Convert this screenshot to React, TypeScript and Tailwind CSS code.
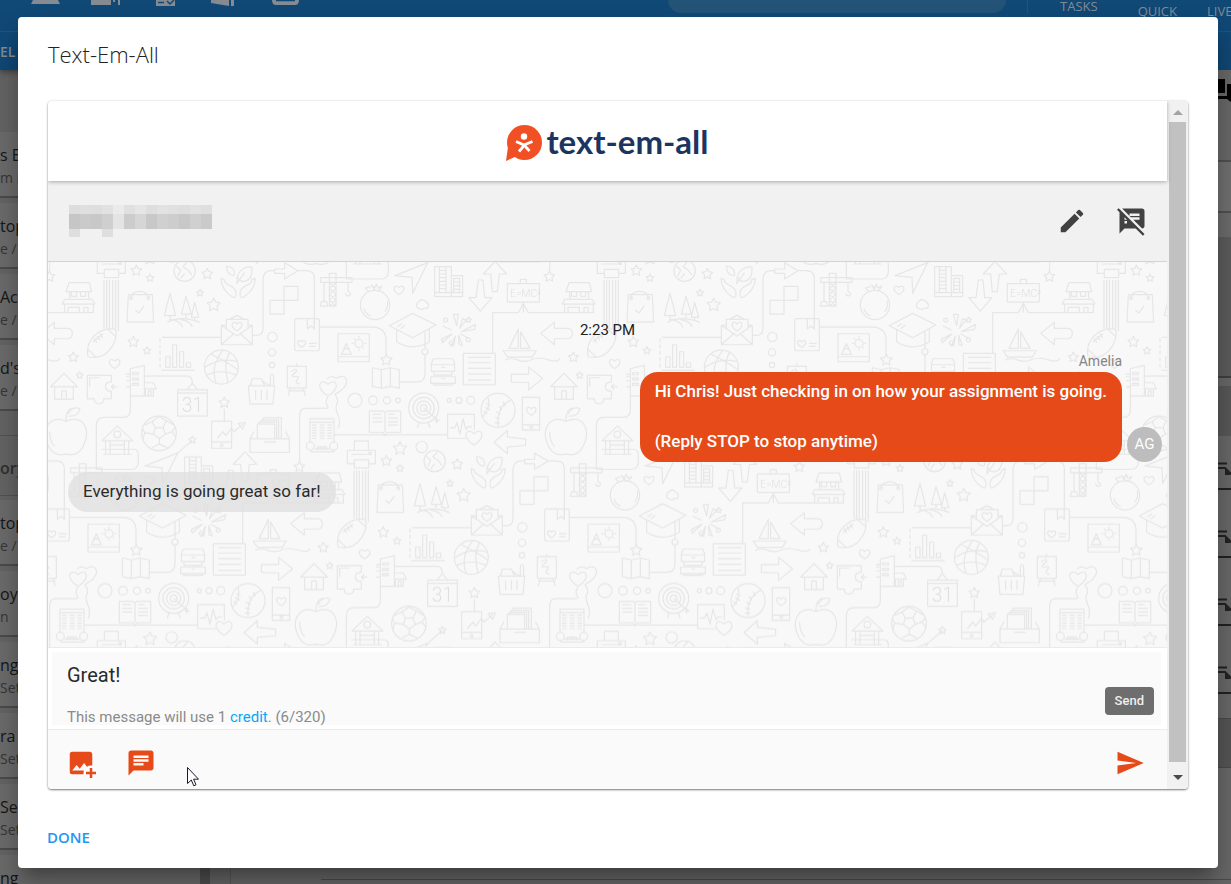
import { MdChat, MdEdit, MdSend, MdSpeakerNotesOff } from "react-icons/md";

const OPEN = "font-['Open_Sans',sans-serif]";
const ROBOTO = "font-[Roboto,sans-serif]";

const firstRows = [
	["s Br", "m In"],
	["top", "e / I"],
	["Acro", "e / C"],
	["d's F", "e / C"],
];

const secondRows = [
	["top", "e / I"],
	["oy", "n"],
	["ng", "Sett"],
	["ra", "Sett"],
	["Se", "Sett"],
	["ng", ""],
];

const stars = [
	[265, 32, 17], [306, 54, 12], [478, 42, 17], [456, 99, 11], [497, 135, 21],
	[256, 246, 17], [297, 272, 12], [76, 292, 16], [95, 346, 11], [433, 540, 12],
	[529, 428, 17], [1015, 300, 18], [1056, 566, 21], [754, 621, 17], [1262, 180, 9],
];

const hearts = [
	[200, 311, 17], [567, 199, 16], [761, 251, 13], [1053, 90, 16],
	[1450, 453, 15], [1278, 533, 26], [840, 385, 27],
];

const circles = [
	[410, 32, 32], [371, -10, 17], [520, 321, 51], [673, 231, 14], [672, 277, 11], [672, 315, 8],
	[333, 520, 52], [981, 135, 44], [933, 250, 12], [1131, 275, 9], [921, 421, 21], [975, 421, 13],
	[1017, 421, 11], [1050, 421, 7], [1127, 444, 45], [1127, 444, 32], [1127, 444, 21], [1127, 444, 10],
	[1204, 421, 6], [1233, 421, 9], [1268, 421, 12], [1350, 451, 51], [208, 523, 10], [521, 556, 4],
	[1450, 501, 4], [787, 558, 12], [857, 558, 12], [1193, 180, 6], [1261, 239, 6],
	[249, 114, 4], [301, 114, 4], [966, 580, 4],
];

const lines = [
	// store
	"M63 68H124L131 95H54ZM65 95V118M122 95V118M70 95V109H86V95M98 95V109H113V95M50 118H132L141 132H43ZM50 132V158H136V132M60 158V142H94V158M108 158V142H120V158M0 158H50",
	// printer and column
	"M169 0V-28H211V0M148 0H232V40H212V28H169V40H148ZM169 40V53H212V40M160 12H222M168 60V205M176 60V205M184 60V205M194 60V205M203 60V205M211 60V214",
	// shopping bag
	"M241 104H313L317 186H237ZM249 112Q252 94 275 94Q298 94 301 112M262 150L273 159L289 137",
	// trees
	"M366 100L349 167H383ZM366 167V180M414 109L400 162H430ZM414 162V174M440 127L430 172H452ZM440 172V182M358 187Q400 165 455 187M365 178Q395 180 405 202M395 178Q425 182 433 200",
	// globe
	"M385 18L398 30L390 48M420 2L405 20L420 30L432 45M398 55L410 40",
	// hands with a plant
	"M519 55Q520 90 552 110Q565 118 564 100Q564 85 545 76Q530 70 528 58ZM622 55Q621 90 588 110Q575 118 576 100Q576 85 596 76Q611 70 612 58ZM567 70Q564 35 590 24Q605 18 612 22Q614 60 590 64Q575 66 569 52M590 38L565 72M557 47Q535 45 536 18Q562 22 560 44Z",
	// arrow along the wire
	"M680 27H710V8L750 32L710 57V40H680ZM613 226H625Q645 226 645 206V60Q645 32 670 32H680M750 32H775Q799 32 799 55V205",
	"M708 79H750V121H708ZM666 121H708V162H666Z",
	// envelope
	"M520 196H535M600 196H613V254H520V196L567 228L613 196M520 254L556 222M613 254L578 222M535 205V178H600V205M545 178L567 166L589 178M342 232H520",
	// bar chart
	"M340 331H440M353 290H366V322H353ZM374 254H386V322H374ZM395 275H407V322H395ZM415 308H428V322H415Z",
	// basketball
	"M488 282Q545 310 570 330M470 322Q520 290 568 305M525 270Q485 320 505 370M545 277Q525 310 540 368M475 345Q520 325 565 345",
	// notebook
	"M746 176H808Q814 176 814 182V266Q814 272 808 272H746Q740 272 740 266V182Q740 176 746 176ZM778 176V207L789 198L799 207V176M783 250H806M783 259H803",
	"M814 201H975Q1014 203 1014 240V285",
	// crane
	"M844 40H864V138H844ZM818 53H912V67H818ZM844 67L864 85L844 103L864 120L844 138M864 67L844 85L864 103L844 120L864 138M828 67V125M820 125H836L839 138H817ZM900 67V95M900 95Q912 100 905 107Q895 110 892 100",
	// house
	"M8 380L48 340L88 380ZM20 380V418H76V380M41 418V392H55V418",
	// puzzle piece
	"M118 346H190V366Q172 366 172 380Q172 394 190 394V416H167Q168 431 153 431Q138 431 139 416H118ZM125 380V353H155M208 380H190L198 371M190 380L198 389",
	// office
	"M247 326L289 316V408H247ZM254 338H271V344H254ZM254 354H271V360H254ZM254 370H271V376H254ZM234 343H247M234 350H244M234 362H247M234 380H247M289 368H316L325 386H289M292 386V408H316V386M301 408V392H309V408M289 348H420Q433 350 433 370L418 388M433 370L448 388",
	"M247 408V450Q247 472 225 472H170Q145 472 145 497V628H250Q271 628 271 605V585Q271 568 258 568H160",
	// calendar
	"M389 389H478V468H389ZM389 399H478",
	// football
	"M120 290Q112 245 150 218Q175 202 203 208Q210 245 180 275Q155 298 120 290ZM120 268L145 292M178 206L205 232M135 245L165 222M138 234L146 248M147 227L155 241M156 221L164 234",
	// soccer ball
	"M322 503H345L352 522L334 536L316 522ZM322 503L312 485L333 470L355 482L345 503M352 522L372 515M316 522L290 518M334 536V552L312 563M334 552L358 563M290 495L312 485M355 482L378 495M290 518L284 540M290 518L283 505M372 515L383 530M372 515L380 503",
	// bank
	"M162 542L208 498L255 542ZM173 542V583M186 542V583M229 542V583M242 542V583M166 583H251M186 555H229",
	// phone with a graph
	"M529 446V484M491 484H551V565H491ZM491 546H551M508 535L525 515L533 527L550 505L558 515L585 492M570 490L592 487L584 507Z",
	// file box
	"M606 536H724V577H606ZM606 536L618 514M724 536L712 514M628 536V492H680V536M634 492V486H686V536M640 486V480H692V536M646 480V473H700V536M648 546H684",
	// basket
	"M601 377H680L675 432H606ZM607 377L613 356H640L650 377M642 362L665 377M667 377V348Q672 338 677 348V377M623 390V420M640 390V420M657 390V420",
	// easel
	"M718 319H775V384H718ZM746 310V319M720 392H773M728 384L720 408M765 384L772 408M730 335Q748 320 745 335Q725 350 738 350Q758 345 748 358Q738 368 755 372",
	// balloons
	"M836 357Q850 343 865 355Q890 340 896 362Q896 385 862 402M840 410Q828 425 840 440Q840 445 835 445H775Q755 445 755 465V605M860 402Q875 420 865 435Q862 450 872 470Q878 490 870 505",
	// bus
	"M786 476H858V546M786 476V546M786 487H858M799 566H845M786 575H860M808 570V560H835V570M817 570V560M826 570V560M792 495H806M792 503H806M792 511H806M792 519H806M792 527H806M792 535H806M815 495H830M815 503H830M815 511H830M815 519H830M815 527H830M815 535H830M838 495H852M838 503H852M838 511H852M838 519H852M838 527H852M838 535H852M858 524H1199",
	// tomato
	"M981 91L970 75L980 84L985 72L990 84L1002 78L992 92ZM968 80L952 84L962 94M1010 155Q1022 142 1018 122M948 145Q952 162 968 168",
	"M1123 149Q1100 145 1107 130Q1113 122 1122 118Q1135 122 1141 133Q1143 149 1128 144Z",
	// graduation cap
	"M1024 197L1094 160L1164 195L1094 233ZM1046 208V246Q1094 275 1144 246V208M1131 213V266M1131 284V340Q1131 366 1106 366H1054M1048 200L1062 190M1058 206L1072 195",
	// map
	"M973 323L1000 329L1027 323L1054 329V385L1027 379L1000 385L973 379ZM1000 329V385M1027 323V379",
	// framed picture
	"M870 221H964V305H870ZM870 290H964M880 283L895 250L910 283ZM887 270L895 264L903 270M933 228V234M933 266V272M911 250H917M949 250H955M918 235L922 239M948 265L944 261",
	// fireworks
	"M1216 163H1231L1226 197ZM1234 205L1245 175L1254 182ZM1240 215L1283 193L1280 208ZM1238 222L1262 235ZM1232 226L1243 257L1233 254ZM1222 228L1217 258L1211 254ZM1212 222L1183 248L1180 238ZM1210 210L1185 198ZM1210 240L1203 250L1210 258L1218 250",
	// towers
	"M1160 20H1210V110H1160ZM1174 20V98M1194 20V98M1174 31H1194M1174 42H1194M1174 53H1194M1174 64H1194M1174 75H1194M1174 86H1194M1160 98H1244M1210 47H1244V110H1210M1217 55H1235V98H1217ZM1217 66H1235M1217 77H1235M1217 88H1235",
	// arrows
	"M1262 113H1284L1291 60H1305L1310 113H1332L1297 153ZM1306 42L1341 4L1376 42H1354L1348 95H1333L1328 42Z",
	"M1478 220L1519 187V205H1556Q1573 205 1573 220Q1573 236 1556 236H1519V254Z",
	"M1390 343H1442V321L1484 355L1442 390V368L1390 366Z",
	"M1338 547L1378 511V531L1433 537V556L1378 561V581Z",
	"M1041 47L1139 8L1094 100L1092 52ZM1139 8L1183 -30",
	// blackboard
	"M1378 71H1474V126H1378ZM1417 71V58H1435V71M1426 130V158M1334 280V158H1411L1426 130L1441 158H1500",
	// sailboat
	"M1411 207V265H1383ZM1418 215L1446 265H1418ZM1365 272H1465L1453 291H1379ZM1372 300Q1390 292 1410 300T1450 299T1500 299T1536 295",
	// document
	"M1246 280H1342V374H1246ZM1260 292H1330M1260 308H1330M1260 325H1330M1260 342H1330M1260 360H1330",
	// stacked boxes
	"M1156 296H1214L1220 310V334H1150V310ZM1150 314H1220M1158 334V345H1212V334M1148 350H1222V370H1148ZM1156 370V375H1214V370M1180 322H1192M1180 356H1192",
	// target stand
	"M1113 487L1108 504M1140 487L1147 504M1127 444L1170 482M1160 482H1175M1166 472V490",
	// open book
	"M964 453H1005L1011 458L1017 453H1058V517H1017L1011 527L1005 517H964ZM1011 458V517M973 463H1000M973 474H1003M973 485H1003M1020 463H1040M1020 474H1050M1020 485H1050M1020 495H1050",
	// heart monitor
	"M1254 535H1199V463H1279V510M1206 503H1220L1227 488L1236 522L1245 476L1254 508L1260 500H1272",
	// baseball
	"M1320 412Q1330 440 1303 472M1388 420Q1345 440 1350 500M1314 430L1328 436M1312 442L1326 450M1306 453L1318 462M1365 425L1372 438M1352 438L1362 450M1344 455L1358 462M1340 472L1356 476M1340 488L1356 488",
	"M1423 412H1475V510H1423ZM1423 494H1475",
	// apple
	"M1554 484Q1525 470 1505 488Q1480 515 1502 560Q1520 592 1554 582Q1588 592 1605 560Q1627 515 1604 488Q1585 470 1554 484ZM1554 482Q1552 450 1575 443M1560 462Q1575 436 1596 446Q1590 470 1562 468M1505 515Q1505 545 1520 560",
];

function starPath(x: number, y: number, r: number) {
	let d = "";
	for (let i = 0; i < 10; i++) {
		const a = -Math.PI / 2 + (i * Math.PI) / 5;
		const rr = i % 2 ? r * 0.5 : r;
		d += `${i ? "L" : "M"}${(x + rr * Math.cos(a)).toFixed(1)} ${(y + rr * Math.sin(a)).toFixed(1)}`;
	}
	return d + "Z";
}

function heartPath(x: number, y: number, r: number) {
	return `M${x} ${y + r * 0.85}C${x - r * 1.6} ${y - r * 0.1} ${x - r * 0.8} ${y - r * 1.3} ${x} ${y - r * 0.45}C${x + r * 0.8} ${y - r * 1.3} ${x + r * 1.6} ${y - r * 0.1} ${x} ${y + r * 0.85}Z`;
}

const copies = [
	[0, 0], [-1500, 0], [750, 571], [-750, 571], [750, -571], [-750, -571], [0, 1142], [-1500, 1142],
];

function Doodles() {
	return (
		<svg className="absolute inset-0 w-full h-full" aria-hidden="true">
			<defs>
				<g id="doodle" fill="none" stroke="#e6e6e6" strokeWidth="3.6" strokeLinejoin="round">
					{lines.map((d) => <path key={d} d={d} />)}
					<path d="M336 235V330" strokeDasharray="12 7" />
					{stars.map(([x, y, r]) => <path key={`${x}-${y}`} d={starPath(x, y, r)} />)}
					{hearts.map(([x, y, r]) => <path key={`${x}-${y}`} d={heartPath(x, y, r)} />)}
					{circles.map(([x, y, r]) => <circle key={`${x}-${y}-${r}`} cx={x} cy={y} r={r} />)}
					<g fill="#dfdfdf" stroke="none" fontFamily="Roboto" fontWeight="300">
						<text x="401" y="455" fontSize="58">31</text>
						<text x="1386" y="112" fontSize="31">E=MC²</text>
					</g>
				</g>
				<pattern
					id="doodles"
					width="1500"
					height="1142"
					patternUnits="userSpaceOnUse"
					patternTransform="translate(0 -2) scale(0.33333)"
				>
					{copies.map(([x, y]) => <use key={`${x} ${y}`} href="#doodle" x={x} y={y} />)}
				</pattern>
			</defs>
			<rect width="100%" height="100%" fill="url(#doodles)" />
		</svg>
	);
}

function Row({ title, sub }: { title: string; sub: string }) {
	return (
		<div className="h-[66px] mb-[5px] pt-[11px] bg-[#6b6b6b] border-b-2 border-[#4b4b4b] whitespace-nowrap">
			<div className="text-base leading-6 text-[#161616]">{title}</div>
			<div className="text-sm leading-[22px] text-[#363636]">{sub}</div>
		</div>
	);
}

function CardIcon() {
	return (
		<svg className="w-[13px] h-[28px]" viewBox="0 0 13 28" fill="none" stroke="#222" strokeWidth="2">
			<path d="M0 1.500H9M0 6H7L13 12M0 27H13" />
			<path d="M7 7V13H13Z" fill="#222" stroke="none" />
		</svg>
	);
}

function Backdrop() {
	return (
		<div className={`fixed inset-0 overflow-hidden flex flex-col bg-[#646464] ${OPEN}`}>
			<header className="shrink-0 bg-[#104876] shadow-[0_2px_6px_rgba(0,0,0,0.4)]">
				<div className="h-[31px] flex items-start text-[#858b90]">
					<svg className="w-[270px] h-[7px] ml-[31px]" viewBox="0 0 270 7" fill="#858b90">
						<path d="M2 0H27L29 4H0ZM60 0H80V5H60ZM82 0H84V2H82ZM87 0H89V5H87ZM125 0H144V6H125ZM180 0H198V6L180 3ZM200 0H203V6H200ZM241 0H268Q268 5 264 5H245Q241 5 241 0Z" />
						<path d="M127 2.500H133M136 1L139 4L143 0M245 0.500H264" stroke="#104876" strokeWidth="1.500" fill="none" />
					</svg>
					<div className="h-[13px] w-[338px] ml-auto rounded-b-2xl bg-[#235477]" />
					<div className="h-[13px] ml-[21px] w-px bg-[#225379]" />
					<div className="ml-8 text-[13px] leading-3">TASKS</div>
					<div className="ml-10 pt-[5px] text-[13px] leading-3">QUICK</div>
					<div className="ml-[30px] pt-[5px] w-6 text-[13px] leading-3">LIVE</div>
				</div>
				<div className="h-[39px] border-t border-[#225379] pt-2 text-sm leading-6 font-semibold text-[#858b90]">EL</div>
			</header>
			<div className="flex flex-1 min-h-0">
				<div className="w-[200px] pt-[62px] overflow-hidden">
					{firstRows.map(([t, s], i) => <Row key={i} title={t} sub={s} />)}
					<div className="mt-6 mb-1 h-[61px] border-y border-[#525252] pt-5 text-base leading-6 font-semibold text-[#303030]">
						ory
					</div>
					{secondRows.map(([t, s], i) => <Row key={i} title={t} sub={s} />)}
				</div>
				<div className="w-[10px] bg-[#4f4f4f]" />
				<div className="w-[21px] bg-[#666] border-r border-[#585858]" />
				<div className="flex-1 flex flex-col items-end bg-[#686868]">
					<div className="w-[13px] flex flex-col">
						<svg className="w-[13px] h-[90px]" viewBox="0 0 13 90">
							<path d="M0 9H7V23H0ZM9 14H13V32L9 29H0V26H9Z" fill="#000" />
						</svg>
						<div className="h-[53px] border-y-2 border-[#505050] bg-[#707070]" />
						<div className="h-6 bg-[#6c6c6c]" />
						<div className="h-[141px] bg-[#5c5c5c] border-b-2 border-[#404040]" />
						<div className="mt-2 h-[50px] bg-[#585858]" />
						<div className="mt-[26px] flex flex-col gap-[40px]">
							<CardIcon />
							<CardIcon />
							<CardIcon />
							<CardIcon />
						</div>
						<div className="mt-[24px] h-[50px] bg-[#555] border-y border-[#4a4a4a]" />
					</div>
					<div className="self-stretch mt-auto mb-1 ml-[90px] h-px bg-[#4c4c4c]" />
				</div>
			</div>
		</div>
	);
}

function Logo() {
	return (
		<div className="flex items-center gap-1">
			<svg className="w-9 h-9" viewBox="0 0 36 36">
				<circle cx="18.500" cy="17.500" r="17.500" fill="#f15025" />
				<path d="M2 22L0 36L11 31Z" fill="#f15025" />
				<circle cx="18" cy="11.500" r="3.200" fill="#fff" />
				<path d="M10 16.500L18 20L26.500 16.500M18.500 20L13 26.500M18 20L23.500 26" stroke="#fff" strokeWidth="2.800" fill="none" />
			</svg>
			<span className="pb-1 font-[Lato,sans-serif] font-bold text-[33px] leading-8 text-[#1c3560]">text-em-all</span>
		</div>
	);
}

const blocks = ["#c6c6c6", "#cacaca", "#c8c8c8", "#cfcfcf", "#e4e4e4", "#cccccc", "#d6d6d6", "#c8c8c8", "#d0d0d0", "#cdcdcd", "#c8c8c8", "#d0d0d0", "#cacaca"];

function HiddenName() {
	return (
		<svg className="w-[143px] h-8" viewBox="0 0 143 32" aria-label="Hidden name">
			{blocks.map((c, i) => (
				<g key={i} fill={c}>
					<rect x={i * 11} y="0" width="11" height="9" opacity="0.45" />
					<rect x={i * 11} y="9" width="11" height="15" />
				</g>
			))}
			<path d="M0 24H11V32H0ZM33 24H44V32H33Z" fill="#dedede" />
		</svg>
	);
}

function Scrollbar() {
	return (
		<div className="w-[21px] shrink-0 flex flex-col items-center bg-[#f1f1f1]" aria-hidden="true">
			<div className="h-[21px] pt-[2px] flex items-center">
				<svg className="w-[10px] h-[5px]" viewBox="0 0 10 5"><path d="M0 5L5 0L10 5Z" fill="#a3a3a3" /></svg>
			</div>
			<div className="w-[17px] flex-1 bg-[#c1c1c1]" />
			<div className="h-[27px] pt-[3px] flex items-center">
				<svg className="w-[10px] h-[5px]" viewBox="0 0 10 5"><path d="M0 0H10L5 5Z" fill="#4a4a4a" /></svg>
			</div>
		</div>
	);
}

export default function App() {
	return (
		<main className="min-h-screen">
			<Backdrop />
			<div className="fixed inset-0 flex pt-[17px] pb-4 pl-[18px] pr-[13px]">
				<section
					role="dialog"
					aria-label="Text-Em-All"
					className="flex-1 flex flex-col min-w-0 bg-white rounded px-[30px] shadow-[0_11px_15px_-7px_rgba(0,0,0,0.3),0_20px_30px_3px_rgba(0,0,0,0.2)]"
				>
					<h1 className={`pt-[23px] pb-[33px] text-[22px] leading-7 font-light text-[#222] ${OPEN}`}>Text-Em-All</h1>
					<div className={`flex flex-1 min-h-0 rounded overflow-hidden shadow-[0_1px_2px_rgba(0,0,0,0.5),0_0_3px_rgba(0,0,0,0.1)] ${ROBOTO}`}>
						<div className="flex-1 min-w-0 flex flex-col">
							<div className="relative z-10 h-20 shrink-0 flex items-center justify-center pt-1 bg-white shadow-[0_1px_4px_rgba(0,0,0,0.3)]">
								<Logo />
							</div>
							<div className="h-[81px] shrink-0 flex items-center gap-[30px] pl-[21px] pr-5 bg-[#f1f1f1] border-b border-[#d3d3d3] text-[#424242]">
								<HiddenName />
								<button aria-label="Edit" className="ml-auto"><MdEdit size={30} /></button>
								<button aria-label="Mute notes"><MdSpeakerNotesOff size={30} /></button>
							</div>

							<div className="relative flex-1 min-h-0 overflow-hidden bg-[#f8f8f8]">
								<Doodles />
								<div className="relative flex flex-col pt-[58px] px-5">
									<div className="self-center text-[15px] leading-5 text-[#222]">2:23 PM</div>
									<div className="self-end mt-[11px] mr-[25px] text-sm leading-5 text-[#858585]">Amelia</div>
									<div className="self-end flex items-end gap-[5px] mt-px -mr-[15px]">
										<p className="rounded-[18px] bg-[#e64a19] px-[15px] pt-[7px] pb-2 text-[17px] leading-[25px] font-medium text-white">
											Hi Chris! Just checking in on how your assignment is going.
											<br />
											<br />
											(Reply STOP to stop anytime)
										</p>
										<span className="size-[35px] rounded-full bg-[#bdbdbd] flex items-center justify-center text-[15px] text-white">AG</span>
									</div>
									<p className="self-start mt-[10px] rounded-[20px] bg-[#e0e0e0]/80 px-[15px] pt-[7px] pb-2 text-[17px] leading-[25px] text-[#2b2b2b]">
										Everything is going great so far!
									</p>
								</div>
							</div>

							<div className="shrink-0 bg-white border-y border-[#ebebeb] p-1 pr-[6px]">
								<div className="bg-[#fafafa] pl-[15px] pr-[7px] pt-2 flex items-end">
									<div className="flex-1">
										<textarea
											aria-label="Message"
											rows={1}
											defaultValue="Great!"
											className="block w-full resize-none overflow-hidden h-[43px] pt-px text-xl leading-7 text-[#2b2b2b] outline-none"
										/>
										<p className="h-[23px] text-[15px] leading-[30px] -mt-px whitespace-nowrap text-[#8a8a8a]">
											This message will use 1 <a href="#credit" className="text-[#03a9f4]">credit</a>. (6/320)
										</p>
									</div>
									<span role="tooltip" className="mb-[10px] h-7 px-[10px] rounded bg-[#6e6e6e] text-[13px] leading-7 font-medium text-[#eee]">Send</span>
								</div>
							</div>
							<div className="relative h-[59px] shrink-0 flex items-center gap-[30px] pl-[18px] pr-[22px] pt-[7px] bg-[#fafafa] text-[#e64a19]">
								<button aria-label="Add image">
									<svg className="size-[30px]" viewBox="0 0 24 24" fill="currentColor">
										<path d="M5,3A2,2 0 0,0 3,5V19A2,2 0 0,0 5,21H14.09C14.03,20.67 14,20.34 14,20C14,19.32 14.12,18.64 14.35,18H5L8.5,13.5L11,16.5L14.5,12L16.73,14.97C17.7,14.34 18.84,14 20,14C20.34,14 20.67,14.03 21,14.09V5C21,3.89 20.1,3 19,3H5M19,16V19H16V21H19V24H21V21H24V19H21V16H19Z" />
									</svg>
								</button>
								<button aria-label="Templates"><MdChat size={30} /></button>
								<button aria-label="Send message" className="ml-auto"><MdSend size={30} /></button>
								<svg className="absolute left-[139px] top-[37px] w-3 h-5" viewBox="0 0 12 20">
									<path d="M0.500 0.500V16.500L4.300 13L6.800 18.800L9 17.800L6.600 12.200H11.500Z" fill="#fff" stroke="#1a1a2a" />
								</svg>
							</div>
						</div>
						<Scrollbar />
					</div>
					<div className="h-[79px] shrink-0 pt-9">
						<button className={`-ml-px block text-[15px] leading-6 font-semibold text-[#2196f3] ${OPEN}`}>DONE</button>
					</div>
				</section>
			</div>
		</main>
	);
}
